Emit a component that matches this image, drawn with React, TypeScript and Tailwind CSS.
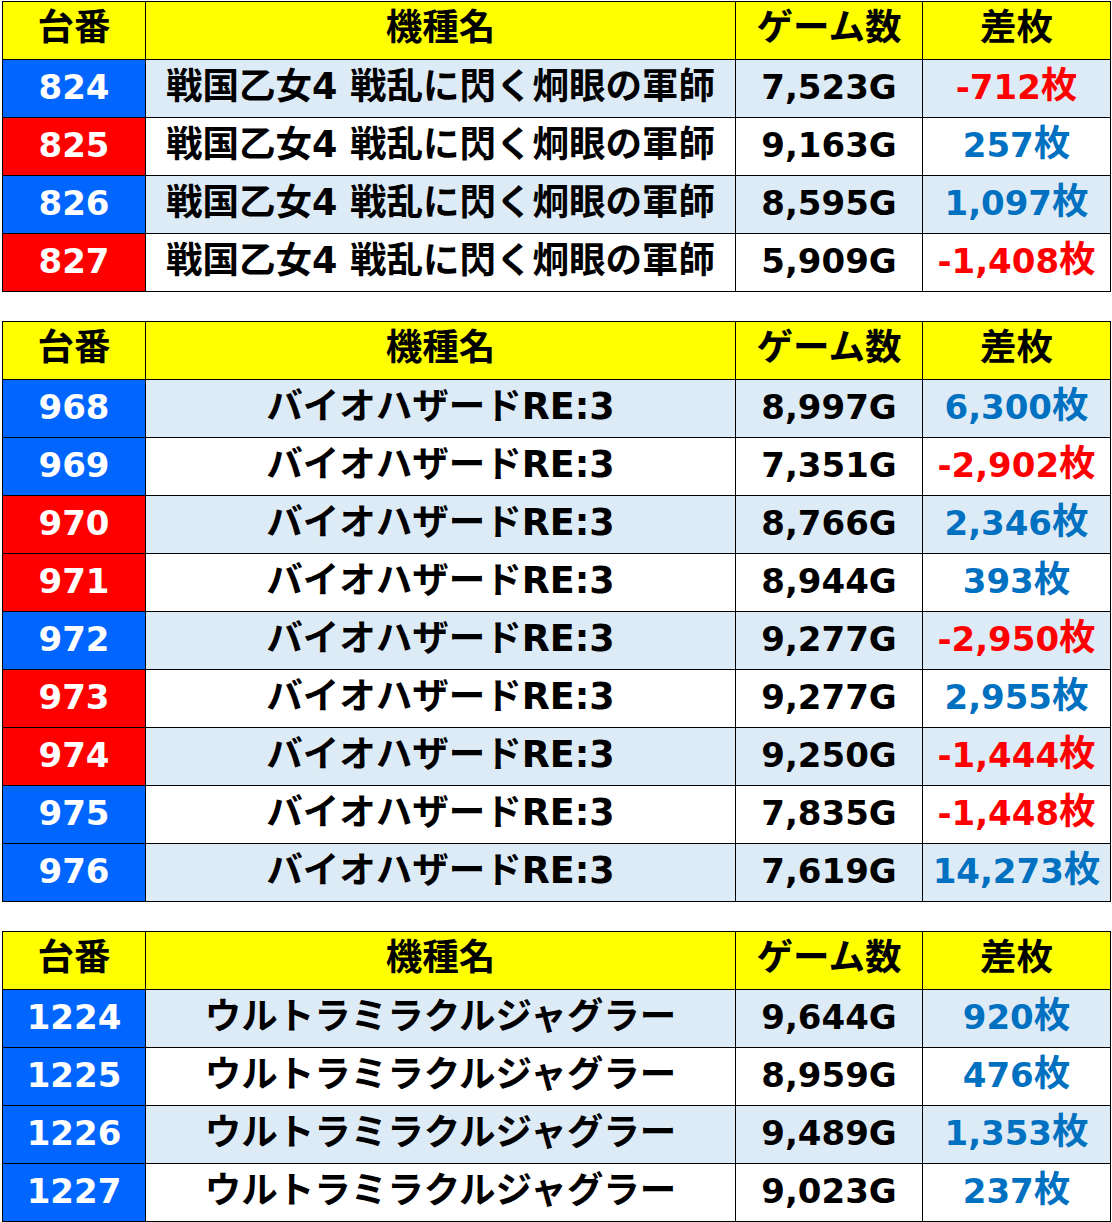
import React from 'react';

type Row = { no: string; hot: boolean; name: string; games: string; diff: string };

const FONT = "font-['DejaVu_Sans','Noto_Sans_CJK_JP',sans-serif]";

const sengoku = '戦国乙女4 戦乱に閃く炯眼の軍師';
const bio = 'バイオハザードRE:3';
const juggler = 'ウルトラミラクルジャグラー';

const tables: Row[][] = [
  [
    { no: '824', hot: false, name: sengoku, games: '7,523G', diff: '-712' },
    { no: '825', hot: true, name: sengoku, games: '9,163G', diff: '257' },
    { no: '826', hot: false, name: sengoku, games: '8,595G', diff: '1,097' },
    { no: '827', hot: true, name: sengoku, games: '5,909G', diff: '-1,408' },
  ],
  [
    { no: '968', hot: false, name: bio, games: '8,997G', diff: '6,300' },
    { no: '969', hot: false, name: bio, games: '7,351G', diff: '-2,902' },
    { no: '970', hot: true, name: bio, games: '8,766G', diff: '2,346' },
    { no: '971', hot: true, name: bio, games: '8,944G', diff: '393' },
    { no: '972', hot: false, name: bio, games: '9,277G', diff: '-2,950' },
    { no: '973', hot: true, name: bio, games: '9,277G', diff: '2,955' },
    { no: '974', hot: true, name: bio, games: '9,250G', diff: '-1,444' },
    { no: '975', hot: false, name: bio, games: '7,835G', diff: '-1,448' },
    { no: '976', hot: false, name: bio, games: '7,619G', diff: '14,273' },
  ],
  [
    { no: '1224', hot: false, name: juggler, games: '9,644G', diff: '920' },
    { no: '1225', hot: false, name: juggler, games: '8,959G', diff: '476' },
    { no: '1226', hot: false, name: juggler, games: '9,489G', diff: '1,353' },
    { no: '1227', hot: false, name: juggler, games: '9,023G', diff: '237' },
  ],
];

const cell = 'h-[58px] flex items-center justify-center border-r border-b border-black whitespace-nowrap';
const head = `${cell} pb-[4px] bg-[#ffff00] text-[36.5px]`;

function SlotTable({ rows }: { rows: Row[] }) {
  return (
    <div className="grid grid-cols-[143px_590px_187px_188px] border-l border-t border-black w-[1109px]">
      <div className={head}>台番</div>
      <div className={head}>機種名</div>
      <div className={head}>ゲーム数</div>
      <div className={head}>差枚</div>
      {rows.map((r, i) => {
        const bg = i % 2 === 0 ? 'bg-[#ddebf7]' : 'bg-white';
        const neg = r.diff.startsWith('-');
        return (
          <React.Fragment key={r.no}>
            <div className={`${cell} pb-[4px] text-white ${r.hot ? 'bg-[#ff0000]' : 'bg-[#0066ff]'}`}>{r.no}</div>
            <div className={`${cell} pb-[2px] ${bg} text-[36.5px]`}>{r.name}</div>
            <div className={`${cell} pb-[4px] ${bg}`}>{r.games}</div>
            <div className={`${cell} pb-[4px] ${bg} ${neg ? 'text-[#ff0000]' : 'text-[#0070c0]'}`}>
              {r.diff}
              <span className="text-[36.5px]">枚</span>
            </div>
          </React.Fragment>
        );
      })}
    </div>
  );
}

export default function App() {
  return (
    <div className={`${FONT} bg-white min-h-[1222px] pt-px pl-[2px] text-[34px] font-bold text-black leading-none flex flex-col gap-[29px]`}>
      {tables.map((rows, i) => (
        <SlotTable key={i} rows={rows} />
      ))}
    </div>
  );
}
